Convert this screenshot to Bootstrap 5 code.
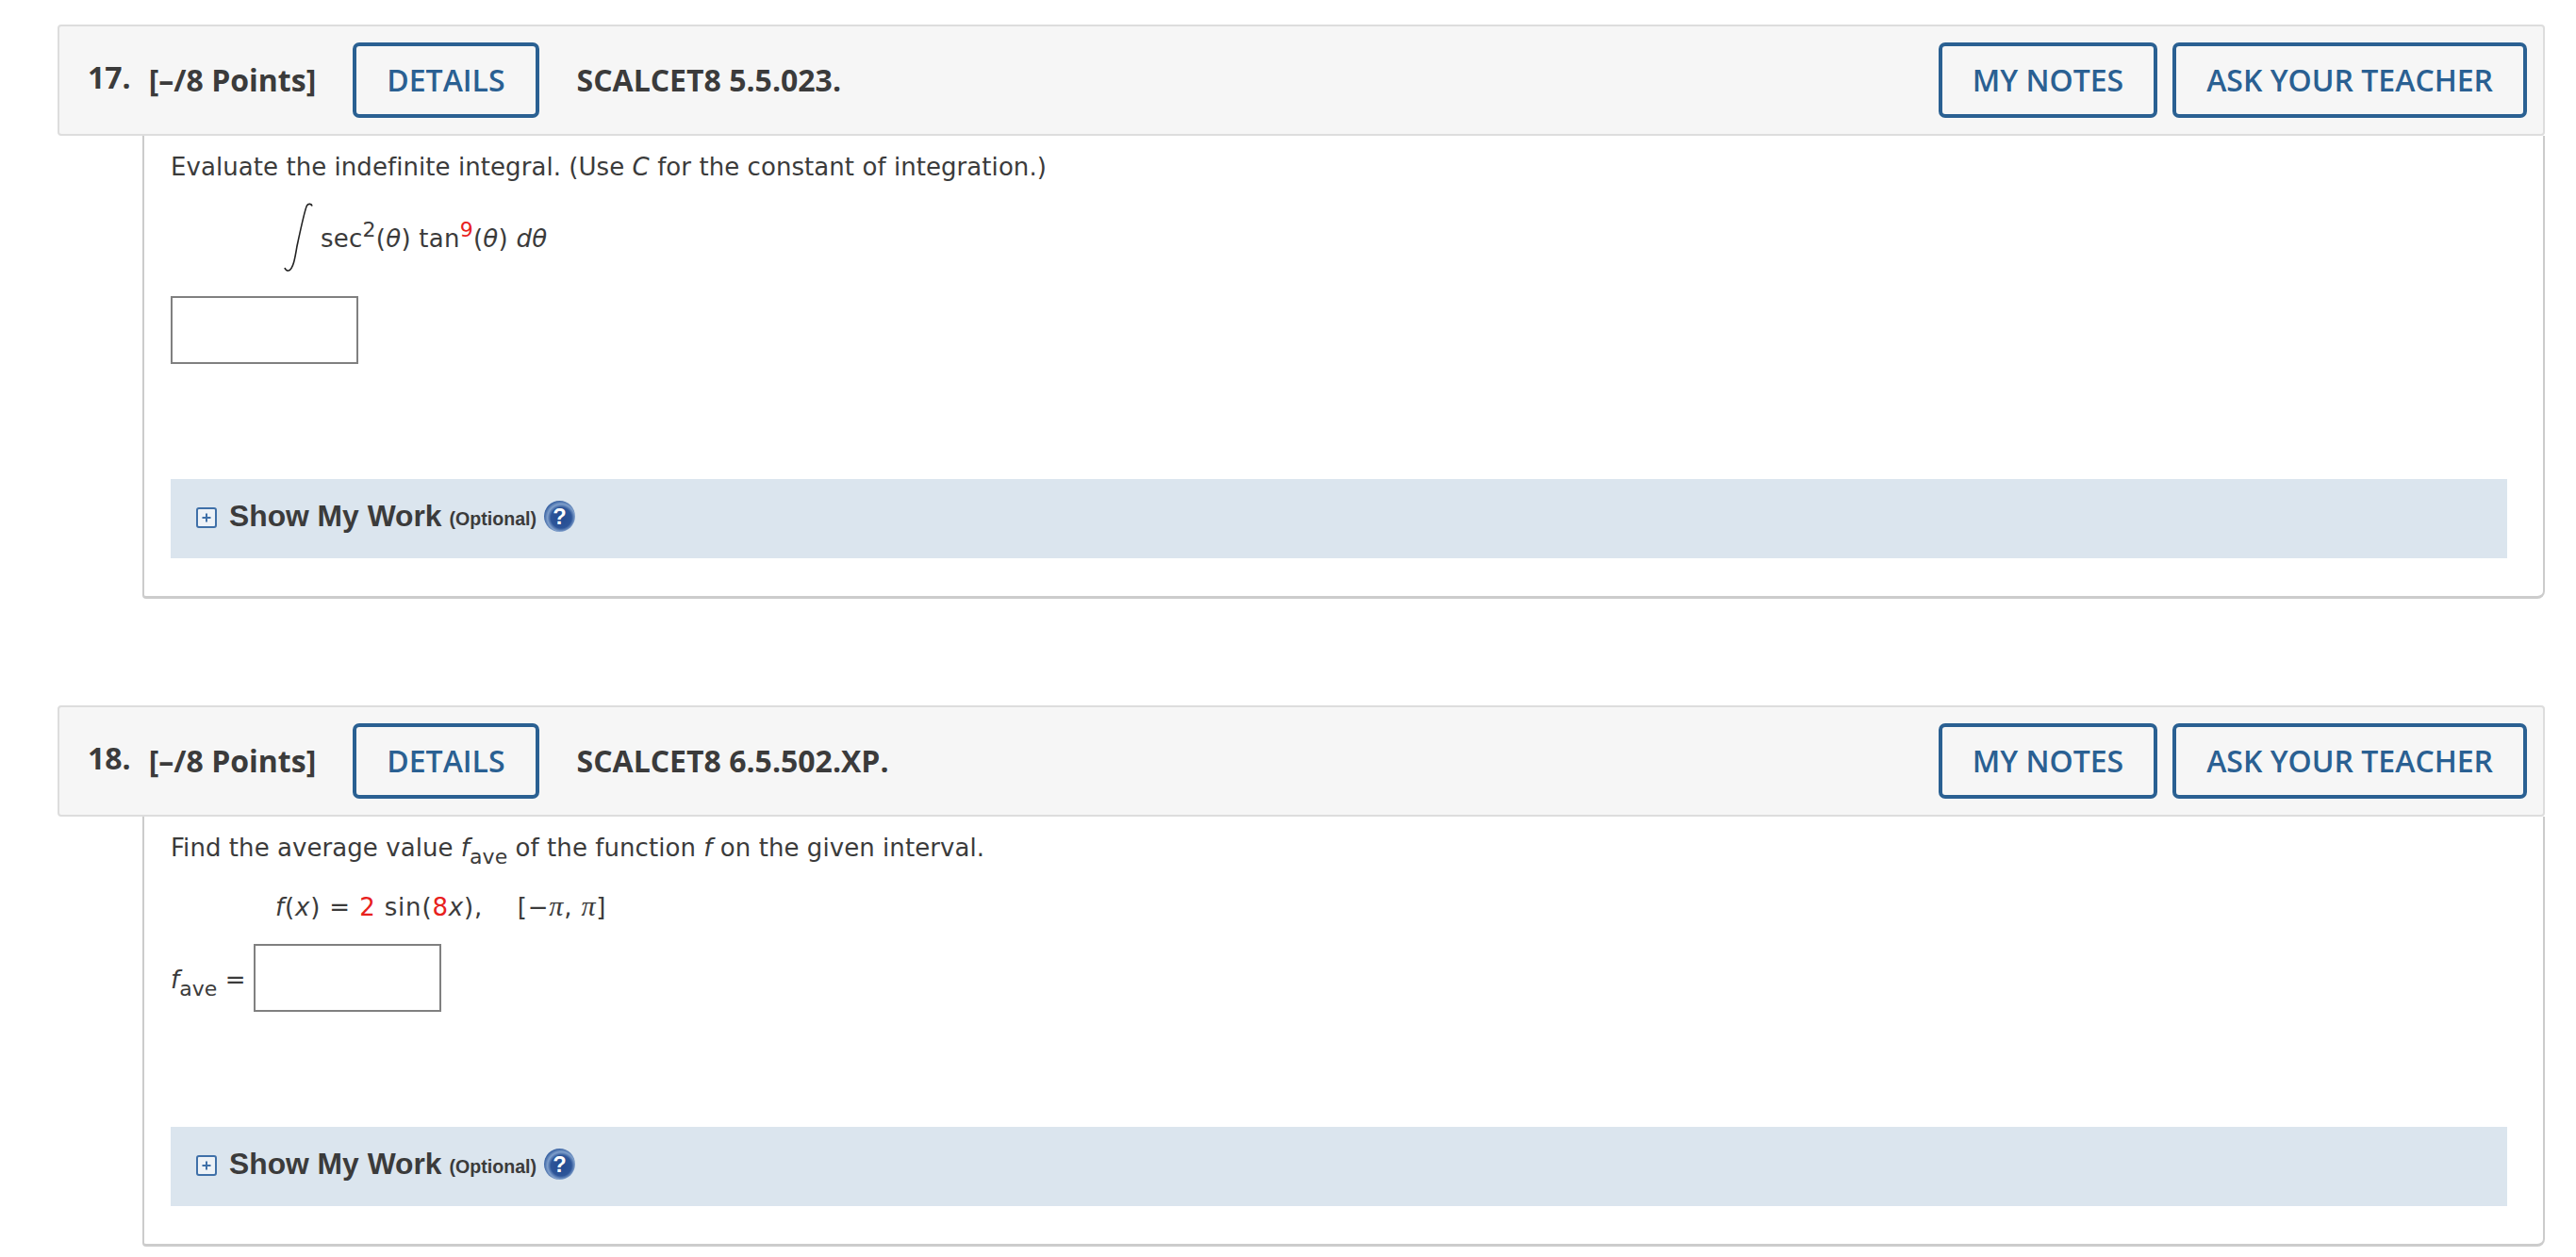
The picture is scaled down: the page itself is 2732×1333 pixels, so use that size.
<!DOCTYPE html>
<html lang="en">

<head>
    <meta charset="UTF-8">
    <meta name="viewport" content="width=device-width, initial-scale=1.0">
    <title>Assignment Questions</title>
    <link href="https://cdn.jsdelivr.net/npm/bootstrap@5.3.3/dist/css/bootstrap.min.css" rel="stylesheet">
    <style>
        body { background: #fff; color: #3b3b3b; font-family: "Open Sans", "Liberation Sans", sans-serif; }
        .page-wrap { padding: 26px 33px 0 61px; }
        .question + .question { margin-top: 113px; }
        .q-head { height: 118px; background: #f6f6f6; border: 2px solid #ddd; border-radius: 4px; padding: 0 17px 0 30px; font-size: 32px; font-weight: 700; }
        .q-num { margin-right: 19px; position: relative; top: -3px; }
        .q-points { margin-right: 39px; }
        .q-code { margin-left: 40px; }
        .q-btn { height: 80px; border: 4px solid #2a6092; border-radius: 7px; background: transparent; color: #2a6092; font-size: 32px; font-weight: 600; padding: 0 32px; line-height: 1; }
        .q-btn + .q-btn { margin-left: 16px; }
        .q-body { margin-left: 90px; border: solid #ccc; border-width: 0 2px 3px 2px; border-bottom-left-radius: 4px; border-bottom-right-radius: 8px; padding: 12px 38px 40px 28px; font-family: "DejaVu Sans", sans-serif; font-size: 26px; letter-spacing: .06px; }
        .q-text { line-height: 42px; }
        .q-math { margin-top: 17px; height: 73px; padding-left: 120px; }
        .q-math-text { margin-top: 4px; letter-spacing: .25px; }
        .q-integral { width: 39px; }
        .q-math-plain { margin-top: 20px; height: 42px; line-height: 42px; padding-left: 111px; letter-spacing: .85px; }
        .q-pi { font-family: "Liberation Serif", serif; font-size: 30px; }
        .q-red { color: #e8211d; }
        .q-sup { font-size: 22px; position: relative; top: -11px; line-height: 0; }
        .q-sub { font-size: 22px; position: relative; top: 8px; line-height: 0; }
        .q-input { display: block; width: 199px; height: 72px; border: 2px solid #808080; background: #fff; }
        .q-answer { margin-top: 26px; }
        .q-answer-label { margin-top: 19px; }
        .q-answer-text { margin-top: 5px; }
        .q-work { margin-top: 122px; height: 84px; background: #dbe5ee; padding-left: 27px; font-family: "Liberation Sans", sans-serif; font-weight: 700; color: #3b3b3b; letter-spacing: 0; }
        .q-work-title { font-size: 31.8px; margin-left: 13px; position: relative; top: -2px; }
        .q-work-note { font-size: 19.6px; margin-left: 8px; margin-top: 1px; }
        .q-help { margin-left: 8px; margin-top: -6px; }
        .q-plus { margin-top: -3px; }
    </style>
</head>

<body>
    <div class="page-wrap">

        <!-- Question 17 -->
        <div class="question">
            <div class="q-head d-flex align-items-center">
                <span class="q-num">17.</span>
                <span class="q-points">[&ndash;/8 Points]</span>
                <button type="button" class="btn q-btn">DETAILS</button>
                <span class="q-code">SCALCET8 5.5.023.</span>
                <button type="button" class="btn q-btn ms-auto">MY NOTES</button>
                <button type="button" class="btn q-btn">ASK YOUR TEACHER</button>
            </div>
            <div class="q-body">
                <div class="q-text">Evaluate the indefinite integral. (Use <i>C</i> for the constant of integration.)</div>
                <div class="q-math d-flex align-items-center">
                    <svg class="q-integral" width="39" height="73" viewBox="0 0 39 73"><path d="M30 3.5C29.5 1 26 .5 24.5 3C22 8 17 32 14 46C12 58 10 71 5 72C3.5 72.3 1.5 71 1 69" fill="none" stroke="#222" stroke-width="1.6"/></svg>
                    <span class="q-math-text">sec<span class="q-sup">2</span>(<i>&theta;</i>) tan<span class="q-sup q-red">9</span>(<i>&theta;</i>) <i>d&theta;</i></span>
                </div>
                <div class="q-answer">
                    <input type="text" class="q-input" aria-label="Answer">
                </div>
                <div class="q-work d-flex align-items-center">
                    <svg class="q-plus" width="22" height="22" viewBox="0 0 22 22"><rect x="1" y="1" width="20" height="20" rx="2" fill="#edf2f7" stroke="#3f70a8" stroke-width="2"/><path d="M6.5 11h9M11 6.5v9" stroke="#3f70a8" stroke-width="2"/></svg>
                    <span class="q-work-title">Show My Work</span>
                    <span class="q-work-note">(Optional)</span>
                    <svg class="q-help" width="33" height="33" viewBox="0 0 32 32"><defs><radialGradient id="helpA" cx="55%" cy="55%" r="55%"><stop offset="0" stop-color="#234a90"/><stop offset=".6" stop-color="#2d5599"/><stop offset=".8" stop-color="#7f9fcb"/><stop offset="1" stop-color="#3a63a3"/></radialGradient></defs><circle cx="16" cy="16" r="16" fill="url(#helpA)"/><text x="16" y="24" text-anchor="middle" font-family="Liberation Sans, sans-serif" font-weight="700" font-size="23" fill="#fff">?</text></svg>
                </div>
            </div>
        </div>

        <!-- Question 18 -->
        <div class="question">
            <div class="q-head d-flex align-items-center">
                <span class="q-num">18.</span>
                <span class="q-points">[&ndash;/8 Points]</span>
                <button type="button" class="btn q-btn">DETAILS</button>
                <span class="q-code">SCALCET8 6.5.502.XP.</span>
                <button type="button" class="btn q-btn ms-auto">MY NOTES</button>
                <button type="button" class="btn q-btn">ASK YOUR TEACHER</button>
            </div>
            <div class="q-body">
                <div class="q-text">Find the average value <i>f</i><span class="q-sub">ave</span> of the function <i>f</i> on the given interval.</div>
                <div class="q-math-plain"><i>f</i>(<i>x</i>) = <span class="q-red">2</span> sin(<span class="q-red">8</span><i>x</i>), &nbsp;&nbsp; [&minus;<i class="q-pi">&pi;</i>, <i class="q-pi">&pi;</i>]</div>
                <div class="q-answer-label d-flex align-items-center gap-2">
                    <span class="q-answer-text"><i>f</i><span class="q-sub">ave</span> =</span>
                    <input type="text" class="q-input" aria-label="Average value">
                </div>
                <div class="q-work d-flex align-items-center">
                    <svg class="q-plus" width="22" height="22" viewBox="0 0 22 22"><rect x="1" y="1" width="20" height="20" rx="2" fill="#edf2f7" stroke="#3f70a8" stroke-width="2"/><path d="M6.5 11h9M11 6.5v9" stroke="#3f70a8" stroke-width="2"/></svg>
                    <span class="q-work-title">Show My Work</span>
                    <span class="q-work-note">(Optional)</span>
                    <svg class="q-help" width="33" height="33" viewBox="0 0 32 32"><defs><radialGradient id="helpB" cx="55%" cy="55%" r="55%"><stop offset="0" stop-color="#234a90"/><stop offset=".6" stop-color="#2d5599"/><stop offset=".8" stop-color="#7f9fcb"/><stop offset="1" stop-color="#3a63a3"/></radialGradient></defs><circle cx="16" cy="16" r="16" fill="url(#helpB)"/><text x="16" y="24" text-anchor="middle" font-family="Liberation Sans, sans-serif" font-weight="700" font-size="23" fill="#fff">?</text></svg>
                </div>
            </div>
        </div>

    </div>

    <script src="https://cdn.jsdelivr.net/npm/bootstrap@5.3.3/dist/js/bootstrap.bundle.min.js"></script>
</body>

</html>
